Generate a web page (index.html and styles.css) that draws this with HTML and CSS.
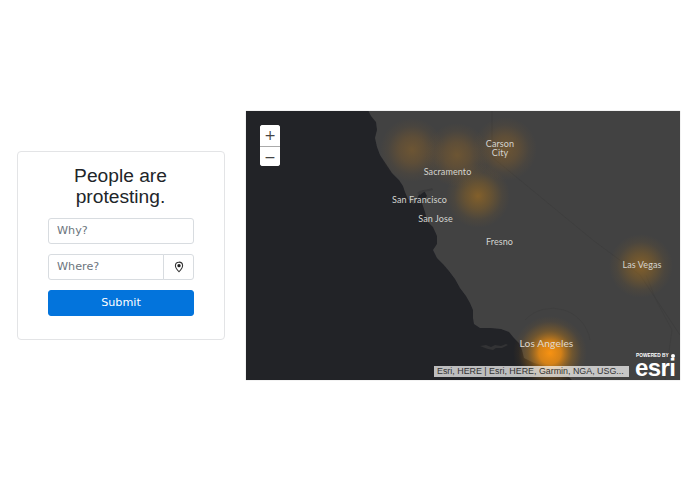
FILE: index.html
```html
<!DOCTYPE html>
<html lang="en">
<head>
<meta charset="utf-8">
<title>People are protesting</title>
<link rel="stylesheet" href="styles.css">
</head>
<body>
<main class="page">
  <form class="card">
    <h1 class="title">People are protesting.</h1>
    <input class="field" type="text" placeholder="Why?">
    <div class="group">
      <input class="field field-joined" type="text" placeholder="Where?">
      <button class="locate" type="button" aria-label="Use my location">
        <svg width="10" height="12" viewBox="0 0 12 14"><path d="M6 1.2C3.5 1.2 1.7 3 1.7 5.4c0 2.6 2.6 5.500 4.300 7.300 1.700-1.800 4.300-4.700 4.300-7.300C10.300 3 8.500 1.200 6 1.200z" fill="none" stroke="#333" stroke-width="1.300"/><circle cx="6" cy="5.400" r="2" fill="#222"/></svg>
      </button>
    </div>
    <button class="submit" type="button">Submit</button>
  </form>
  <section class="map">
    <svg class="basemap" viewBox="246 111 434 269" width="434" height="269">
      <defs>
        <radialGradient id="glow-weak">
          <stop offset="0" stop-color="#a8701f" stop-opacity=".42"/>
          <stop offset=".4" stop-color="#a06a20" stop-opacity=".3"/>
          <stop offset=".75" stop-color="#a06a20" stop-opacity=".08"/>
          <stop offset="1" stop-color="#a06a20" stop-opacity="0"/>
        </radialGradient>
        <radialGradient id="glow-mid">
          <stop offset="0" stop-color="#b87818" stop-opacity=".55"/>
          <stop offset=".4" stop-color="#a87018" stop-opacity=".36"/>
          <stop offset=".75" stop-color="#a87018" stop-opacity=".09"/>
          <stop offset="1" stop-color="#a87018" stop-opacity="0"/>
        </radialGradient>
        <radialGradient id="glow-strong">
          <stop offset="0" stop-color="#f79212"/>
          <stop offset=".3" stop-color="#e88a12" stop-opacity=".88"/>
          <stop offset=".6" stop-color="#b07216" stop-opacity=".42"/>
          <stop offset=".85" stop-color="#a86c16" stop-opacity=".08"/>
          <stop offset="1" stop-color="#a86c16" stop-opacity="0"/>
        </radialGradient>
        <filter id="soft" x="-5%" y="-5%" width="110%" height="110%"><feGaussianBlur stdDeviation=".6"/></filter>
      </defs>
      <rect x="246" y="111" width="434" height="269" fill="#222327"/>
      <path filter="url(#soft)" fill="#424243" d="M367 108L371 116 376 122 377 130 375 138 377 147 380 155 386 164 392 173 399 180 403 186 405 192 408 199 414 204 417 199 420 192 424 190 427 196 422 203 425 212 427 221 433 227 437 236 437 244 433 250 437 258 443 264 449 271 455 279 460 288 466 296 470 303 473 310 473 318 474 324 480 328 491 328 501 329 509 332 514 338 519 343 522 350 524 358 534 363 546 366 558 371 568 376 575 383 690 383 690 108Z"/>
      <path fill="#333335" d="M480 346l6-1 5 2 4-2 6 1 5-2 2 1-6 3-6 0-3 2-5-1-3-1z"/>
      <path fill="#3a3a3b" d="M417 193l3-2 4-1 5-1 3-1 1 2-4 1-5 1-4 3z"/>
      <g fill="none" stroke="#3d3d3e" stroke-width=".8">
        <path d="M492 111V157L594 241"/>
        <path d="M594 241L640 275 680 335"/>
        <path d="M646 275L656 300 672 330 665 380"/>
        <path d="M525 320A38 38 0 0 1 590 340"/>
      </g>
      <circle cx="412" cy="150" r="32" fill="url(#glow-weak)"/>
      <circle cx="457" cy="155" r="32" fill="url(#glow-weak)"/>
      <circle cx="478" cy="196" r="32" fill="url(#glow-mid)"/>
      <circle cx="505" cy="149" r="32" fill="url(#glow-weak)"/>
      <circle cx="641" cy="266" r="32" fill="url(#glow-mid)"/>
      <circle cx="550" cy="353" r="37" fill="url(#glow-strong)"/>
      <g class="labels">
        <text x="447.500" y="174.500" text-anchor="middle">Sacramento</text>
        <text x="500" y="146.500" text-anchor="middle">Carson</text>
        <text x="500" y="156" text-anchor="middle">City</text>
        <text x="419.500" y="203" text-anchor="middle">San Francisco</text>
        <text x="435.500" y="222" text-anchor="middle">San Jose</text>
        <text x="499.500" y="245" text-anchor="middle">Fresno</text>
        <text x="642" y="268" text-anchor="middle">Las Vegas</text>
        <text class="label-big" x="546.500" y="347" text-anchor="middle">Los Angeles</text>
      </g>
    </svg>
    <div class="zoom">
      <button class="zoom-btn" type="button">+</button>
      <button class="zoom-btn" type="button">−</button>
    </div>
    <div class="attribution">Esri, HERE | Esri, HERE, Garmin, NGA, USG...</div>
    <div class="esri"><span class="esri-powered">POWERED BY</span><span class="esri-name">esri</span></div>
  </section>
</main>
</body>
</html>
```

FILE: styles.css
```css
* { box-sizing: border-box; }
html, body { margin: 0; background: #fff; }
.page {
  display: flex;
  align-items: center;
  gap: 21px;
  height: 491px;
  padding-left: 17px;
}
.card {
  width: 208px;
  height: 189px;
  padding: 13px 30px 0;
  border: 1px solid #e3e4e6;
  border-radius: 4px;
  display: flex;
  flex-direction: column;
  flex: none;
}
.title {
  margin: 0 0 11px;
  padding-right: 1px;
  font: 400 19.200px/21px "Liberation Sans", Arial, sans-serif;
  color: #212529;
  text-align: center;
}
.field {
  display: block;
  width: 100%;
  height: 26px;
  padding: 0 8px 2px;
  border: 1px solid #d8dce0;
  border-radius: 3px;
  font: 11.200px "DejaVu Sans", sans-serif;
  color: #495057;
  background: #fff;
  outline: none;
}
.field::placeholder { color: #6c757d; opacity: 1; }
.group { display: flex; margin-top: 10px; }
.field-joined { flex: 1; min-width: 0; border-radius: 3px 0 0 3px; }
.locate {
  width: 31px;
  height: 26px;
  margin-left: -1px;
  padding: 0;
  border: 1px solid #d8dce0;
  border-radius: 0 3px 3px 0;
  background: #fff;
  display: flex;
  align-items: center;
  justify-content: center;
}
.submit {
  height: 26px;
  margin-top: 10px;
  border: 1px solid #0374dc;
  border-radius: 3px;
  background: #0374dc;
  color: #fff;
  font: 11.200px "DejaVu Sans", sans-serif;
  padding: 0 0 2px;
}
.map {
  position: relative;
  width: 434px;
  height: 269px;
  flex: none;
  overflow: hidden;
  box-shadow: 0 0 1px rgba(0, 0, 0, .3);
}
.basemap { display: block; }
.labels text {
  font-family: Lato, sans-serif;
  font-size: 9px;
  letter-spacing: .1px;
  fill: #d4d4d0;
}
.labels .label-big { font-size: 10.200px; fill: #dedad2; }
.zoom {
  position: absolute;
  left: 14px;
  top: 14px;
  width: 20px;
  border-radius: 3px;
  background: #fff;
  display: flex;
  flex-direction: column;
  overflow: hidden;
}
.zoom-btn {
  height: 20.500px;
  padding: 0;
  border: 0;
  background: #fff;
  font: 14px/20px "DejaVu Sans", sans-serif;
  color: #444;
}
.zoom-btn + .zoom-btn { border-top: 1px solid #aaa; }
.attribution {
  position: absolute;
  left: 188px;
  top: 255px;
  width: 195px;
  height: 11px;
  padding-left: 3px;
  background: rgba(255, 255, 255, .7);
  font: 8.900px/11px "Liberation Sans", Arial, sans-serif;
  color: #333;
  white-space: nowrap;
}
.esri {
  position: absolute;
  left: 389px;
  top: 242px;
  width: 40px;
  color: #fff;
  display: flex;
  flex-direction: column;
  align-items: flex-start;
}
.esri-powered {
  display: flex;
  align-items: center;
  gap: 2px;
  font: 700 4.800px/6px "Liberation Sans", Arial, sans-serif;
  white-space: nowrap;
  padding-left: 1px;
}
.esri-powered::after {
  content: "";
  width: 4px;
  height: 4px;
  border-radius: 50%;
  background: #fff;
}
.esri-name {
  font: 700 24px/17px "Liberation Sans", Arial, sans-serif;
  letter-spacing: -.6px;
}
```
